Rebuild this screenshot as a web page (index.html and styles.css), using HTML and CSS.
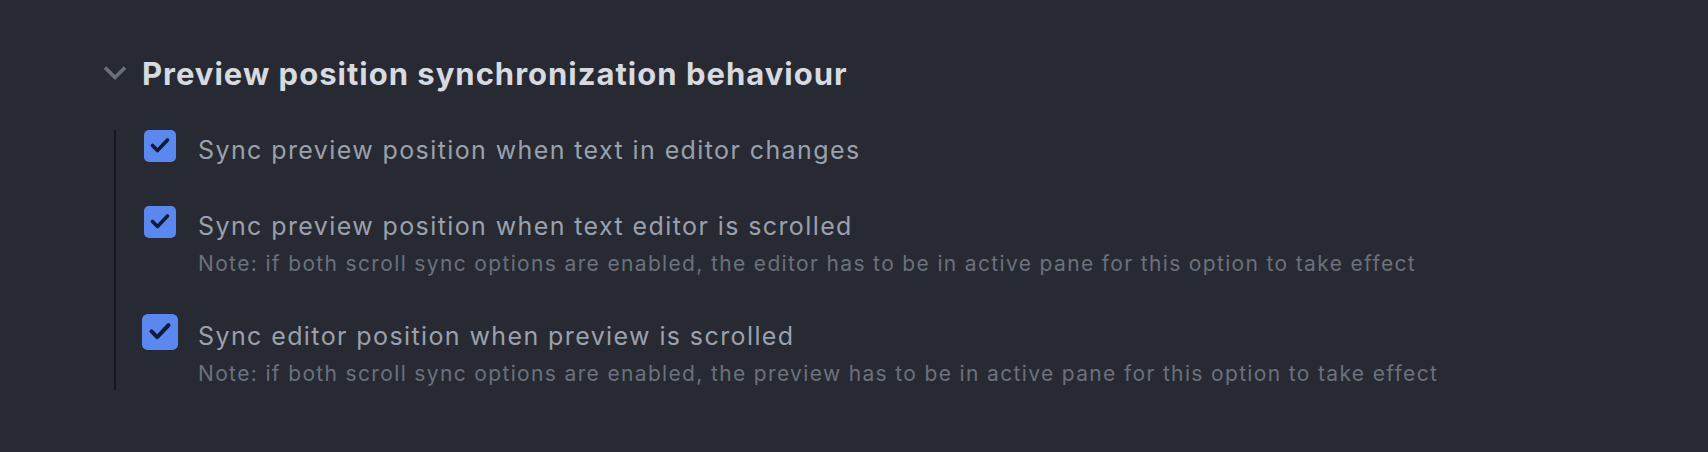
FILE: index.html
```html
<!DOCTYPE html>
<html>
<head>
<meta charset="utf-8">
<link rel="stylesheet" href="styles.css">
</head>
<body>
<section class="settings">
  <h2 class="section-title">
    <svg class="chevron" width="24" height="16" viewBox="0 0 24 16"><polyline points="2,2.5 12,12.5 22,2.5" fill="none" stroke="currentColor" stroke-width="3.6" stroke-linejoin="miter"/></svg>
    <span>Preview position synchronization behaviour</span>
  </h2>
  <div class="options">
    <label class="option">
      <span class="checkbox"><svg viewBox="0 0 32 32" width="32" height="32"><path d="M8.5 15.5 L13.5 20.5 L23.5 10" fill="none" stroke="currentColor" stroke-width="3.6" stroke-linecap="round" stroke-linejoin="round"/></svg></span>
      <span class="text">
        <span class="label">Sync preview position when text in editor changes</span>
      </span>
    </label>
    <label class="option">
      <span class="checkbox"><svg viewBox="0 0 32 32" width="32" height="32"><path d="M8.5 15.5 L13.5 20.5 L23.5 10" fill="none" stroke="currentColor" stroke-width="3.6" stroke-linecap="round" stroke-linejoin="round"/></svg></span>
      <span class="text">
        <span class="label">Sync preview position when text editor is scrolled</span>
        <span class="note">Note: if both scroll sync options are enabled, the editor has to be in active pane for this option to take effect</span>
      </span>
    </label>
    <label class="option">
      <span class="checkbox active"><svg viewBox="0 0 32 32" width="32" height="32"><path d="M8.5 15.5 L13.5 20.5 L23.5 10" fill="none" stroke="currentColor" stroke-width="3.6" stroke-linecap="round" stroke-linejoin="round"/></svg></span>
      <span class="text">
        <span class="label">Sync editor position when preview is scrolled</span>
        <span class="note">Note: if both scroll sync options are enabled, the preview has to be in active pane for this option to take effect</span>
      </span>
    </label>
  </div>
</section>
</body>
</html>
```
FILE: styles.css
```css
html, body {
  margin: 0;
  padding: 0;
  background: #272a32;
  height: 100%;
}
body {
  font-family: Inter, "Liberation Sans", sans-serif;
}
.settings {
  padding: 56px 0 0 103px;
}
.section-title {
  margin: 0;
  display: flex;
  align-items: center;
  font-size: 31px;
  line-height: 36px;
  letter-spacing: 1px;
  font-weight: 700;
  color: #d7dae0;
}
.chevron {
  color: #6a707b;
  margin-right: 15px;
  margin-top: -3px;
}
.options {
  margin: 38px 0 0 11px;
  border-left: 2px solid #16181c;
  padding: 0 0 2px 28px;
  display: flex;
  flex-direction: column;
  gap: 38px;
}
.option {
  display: flex;
  align-items: flex-start;
  gap: 22px;
}
.checkbox {
  flex: none;
  width: 32px;
  height: 32px;
  border-radius: 5px;
  background: #5b88ef;
  color: #121a38;
  display: flex;
}
.checkbox.active {
  transform: scale(1.125);
}
.text {
  display: flex;
  flex-direction: column;
  padding-top: 2px;
}
.label {
  font-size: 25px;
  line-height: 36px;
  letter-spacing: 1.4px;
  color: #9aa1ad;
}
.note {
  margin-top: 6px;
  font-size: 21px;
  line-height: 28px;
  letter-spacing: 1.35px;
  color: #6b717d;
}
```
